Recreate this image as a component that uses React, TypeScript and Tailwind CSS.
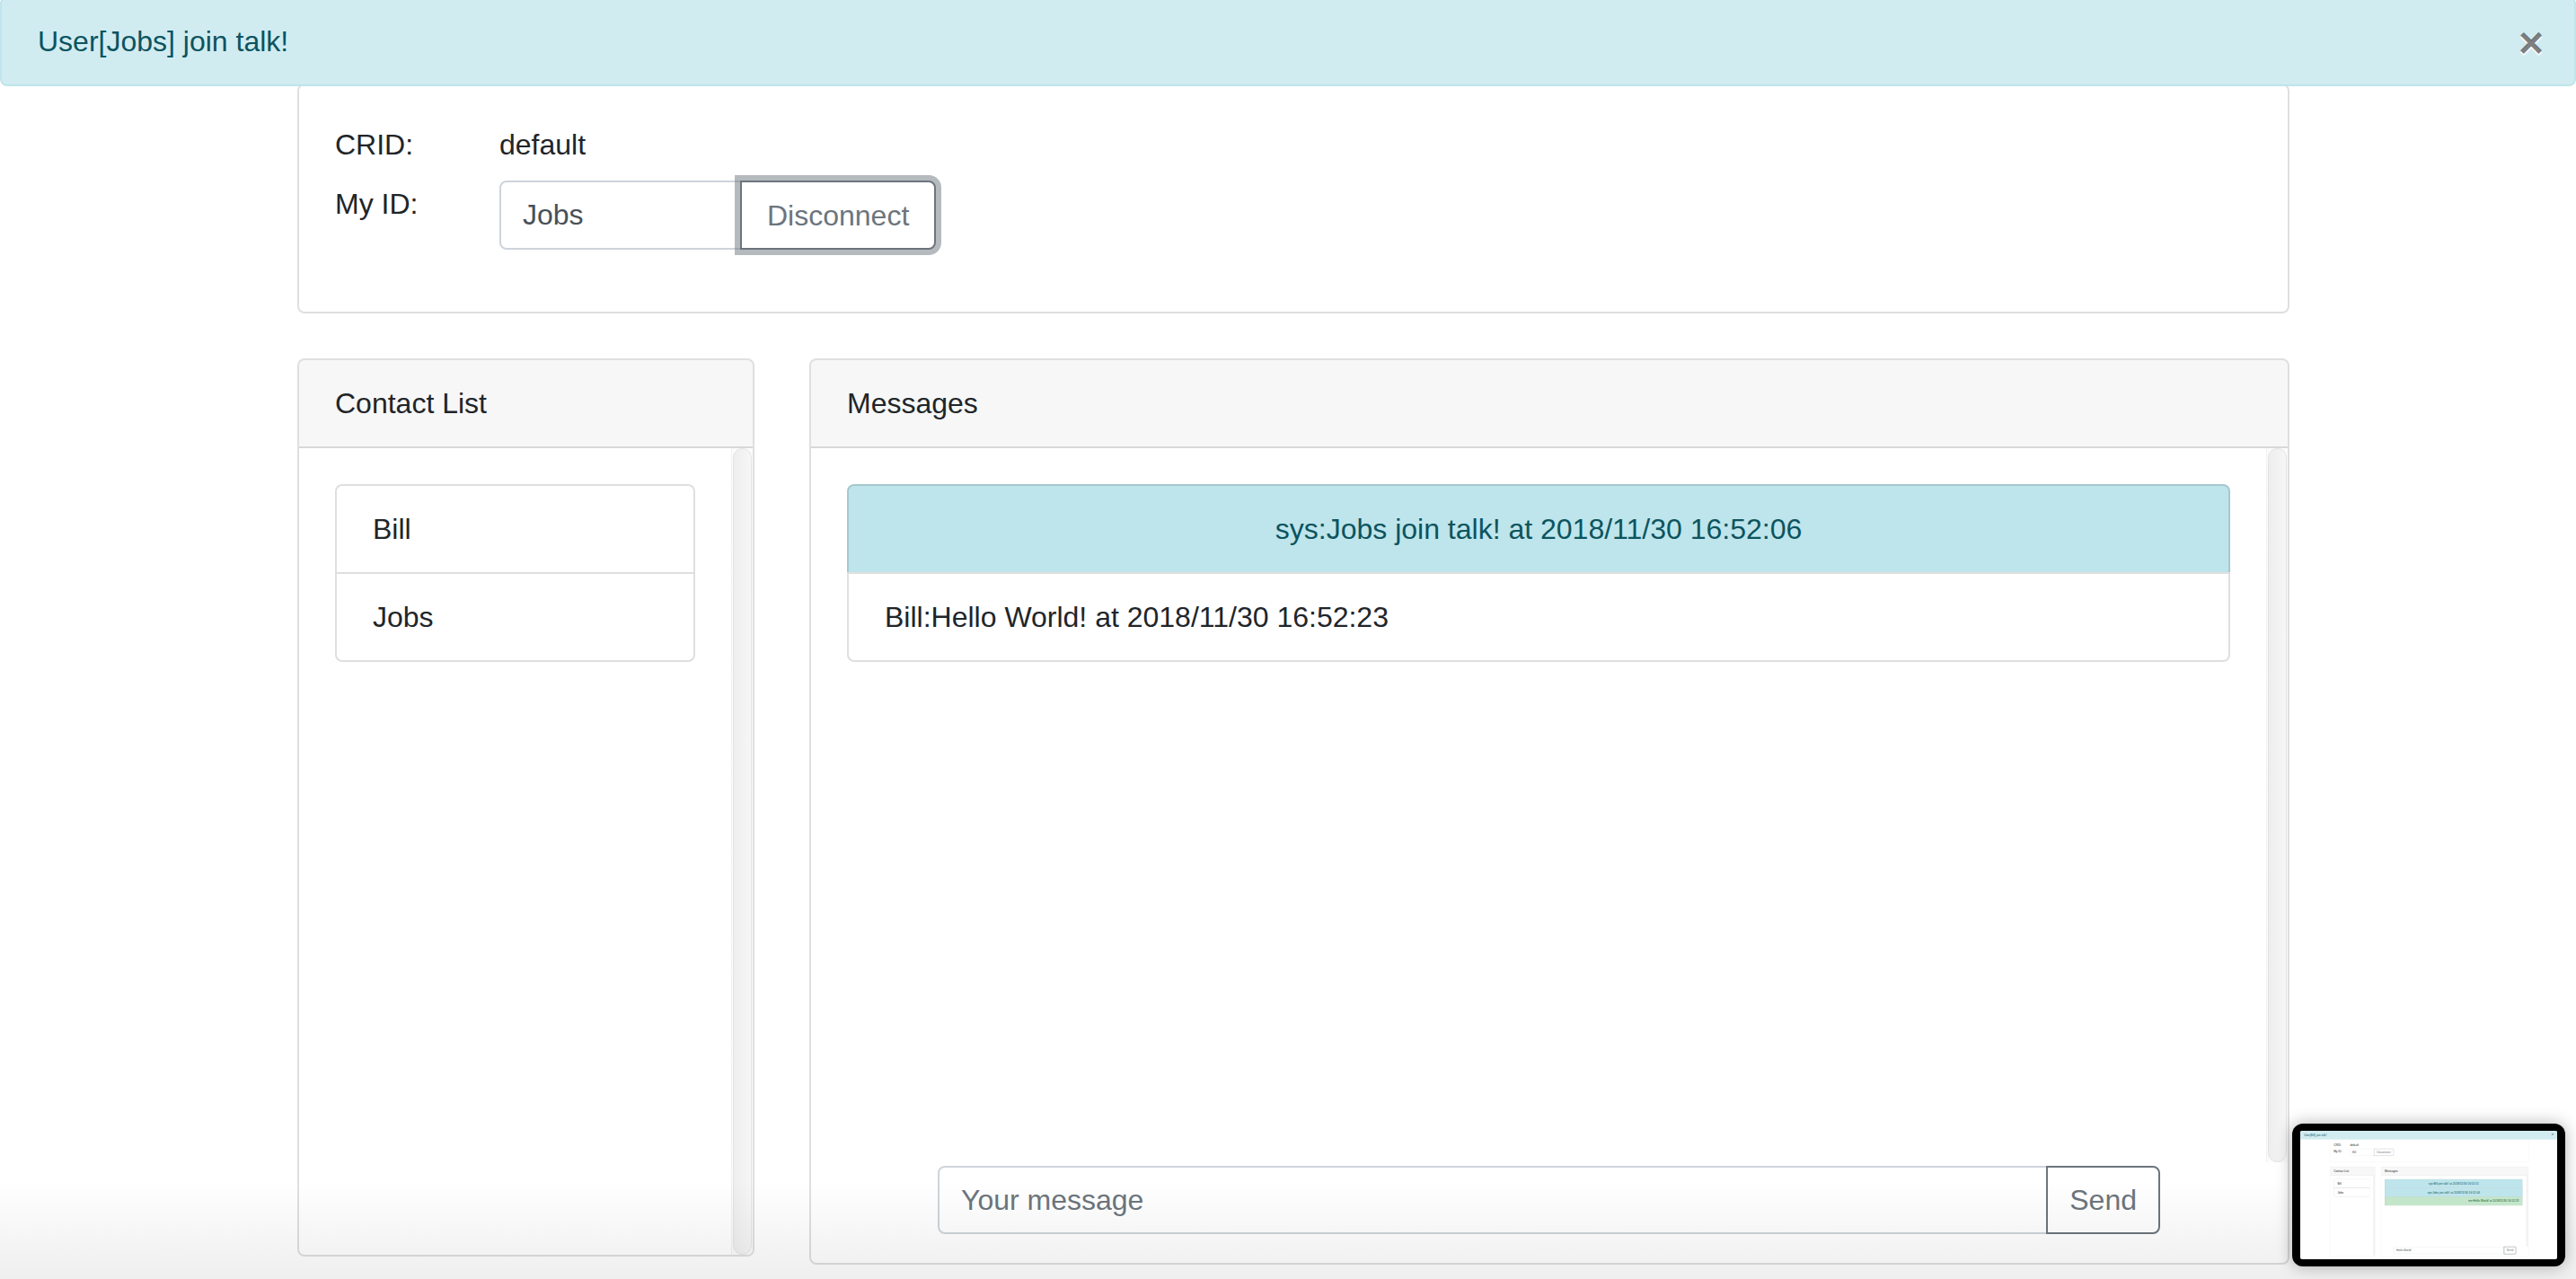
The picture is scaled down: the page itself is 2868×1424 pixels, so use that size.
import React from "react";

type Msg = { text: string; kind: "info" | "plain" | "success" };

type PageProps = {
	alert: string;
	myId: string;
	messages: Msg[];
	draft: string;
	disconnectFocused: boolean;
	sendFocused: boolean;
};

const main: PageProps = {
	alert: "User[Jobs] join talk!",
	myId: "Jobs",
	messages: [
		{ text: "sys:Jobs join talk! at 2018/11/30 16:52:06", kind: "info" },
		{ text: "Bill:Hello World! at 2018/11/30 16:52:23", kind: "plain" },
	],
	draft: "",
	disconnectFocused: true,
	sendFocused: false,
};

// the little screenshot preview in the corner shows Bill's window
const preview: PageProps = {
	alert: "User[Bill] join talk!",
	myId: "Bill",
	messages: [
		{ text: "sys:Bill join talk! at 2018/11/30 16:51:51", kind: "info" },
		{ text: "sys:Jobs join talk! at 2018/11/30 16:52:06", kind: "info" },
		{ text: "me:Hello World! at 2018/11/30 16:52:23", kind: "success" },
	],
	draft: "Hello World!",
	disconnectFocused: false,
	sendFocused: true,
};

const kindClass = {
	info: "bg-[#bee5eb] text-[#0c5460] text-center",
	plain: "bg-white text-[#212529]",
	success: "bg-[#c3e6cb] text-[#155724] text-right",
};

const focusRing = "shadow-[0_0_0_6px_rgba(108,117,125,0.5)]";

function Scrollbar() {
	return (
		<div className="flex w-[24px] shrink-0 justify-center border-l border-[#f1f1f1] bg-[#fbfbfb]">
			<div className="w-[21px] rounded-full border border-[#e3e3e3] bg-linear-to-r from-[#eeeeee] to-[#f6f6f6]" />
		</div>
	);
}

function ListGroup({ items }: { items: Msg[] }) {
	return (
		<div className="flex flex-col">
			{items.map((item, i) => (
				<div
					className={`border-2 border-black/[0.125] px-10 py-6 leading-[48px] ${kindClass[item.kind]} ${
						i === 0 ? "rounded-t-[8px]" : "-mt-[2px]"
					} ${i === items.length - 1 ? "rounded-b-[8px]" : ""}`}
					key={item.text}
				>
					{item.text}
				</div>
			))}
		</div>
	);
}

function CardHeader({ title }: { title: string }) {
	return <div className="border-b-2 border-black/[0.125] bg-black/[0.03] px-10 py-6 leading-[48px]">{title}</div>;
}

function Page(props: PageProps) {
	return (
		<div className="relative h-[1424px] w-[2868px] overflow-hidden bg-white font-['Liberation_Sans',Arial,sans-serif] text-[32px] text-[#212529]">
			<div className="pl-[331px] pt-[93px]">
				<div className="w-[2218px] rounded-[8px] border-2 border-black/[0.125] px-10 pb-10 pt-[42px]">
					<div className="flex leading-[48px]">
						<div className="w-[183px]">CRID:</div>
						<div>default</div>
					</div>
					<div className="mb-[29px] mt-4 flex">
						<div className="w-[183px] pt-[2px] leading-[48px]">My ID:</div>
						<div className="flex">
							<input
								className="h-[77px] w-[270px] rounded-l-[8px] border-2 border-[#ced4da] bg-white px-6 text-[#495057] outline-none"
								readOnly
								value={props.myId}
							/>
							<button
								className={`relative -ml-[2px] h-[77px] rounded-r-[8px] border-2 border-[#6c757d] bg-white px-[28px] text-[#6c757d] ${
									props.disconnectFocused ? focusRing : ""
								}`}
								type="button"
							>
								Disconnect
							</button>
						</div>
					</div>
				</div>

				<div className="mt-[50px] flex items-start gap-[61px]">
					<div className="flex h-[1000px] w-[509px] flex-col overflow-hidden rounded-[8px] border-2 border-black/[0.125]">
						<CardHeader title="Contact List" />
						<div className="flex min-h-0 flex-1">
							<div className="flex-1 p-10">
								<ListGroup
									items={[
										{ text: "Bill", kind: "plain" },
										{ text: "Jobs", kind: "plain" },
									]}
								/>
							</div>
							<Scrollbar />
						</div>
					</div>

					<div className="flex h-[1009px] w-[1648px] flex-col overflow-hidden rounded-[8px] border-2 border-black/[0.125]">
						<CardHeader title="Messages" />
						<div className="flex min-h-0 flex-1">
							<div className="flex-1 p-10">
								<ListGroup items={props.messages} />
							</div>
							<Scrollbar />
						</div>
						<div className="pb-[32px] pl-[141px] pt-[4px]">
							<div className="flex w-[1361px]">
								<input
									className="h-[76px] min-w-0 flex-1 rounded-l-[8px] border-2 border-[#ced4da] bg-white px-6 text-[#495057] outline-none placeholder:text-[#6c757d]"
									placeholder="Your message"
									readOnly
									value={props.draft}
								/>
								<button
									className={`relative -ml-[2px] h-[76px] rounded-r-[8px] border-2 border-[#6c757d] bg-white px-6 text-[#6c757d] ${
										props.sendFocused ? focusRing : ""
									}`}
									type="button"
								>
									Send
								</button>
							</div>
						</div>
					</div>
				</div>
			</div>

			<div className="absolute left-0 right-0 top-[-4px] flex h-[100px] items-center justify-between rounded-[8px] border-2 border-[#bee5eb] bg-[#d1ecf1] pl-[40px] pr-[34px] text-[#0c5460]">
				<span>{props.alert}</span>
				<span className="mt-[4px] text-[48px] font-bold leading-none text-black/50 [text-shadow:0_2px_0_#fff]">×</span>
			</div>
		</div>
	);
}

export default function App() {
	return (
		<div className="relative h-[1424px] w-[2868px] overflow-hidden">
			<Page {...main} />
			<div className="pointer-events-none absolute bottom-0 left-0 right-0 h-[110px] bg-linear-to-b from-black/0 to-black/[0.065]" />
			<div className="absolute bottom-[14px] right-[12px] h-[159px] w-[304px] rounded-[12px] bg-black px-[9px] py-[8px] shadow-[0_0_18px_rgba(0,0,0,0.3)]">
				<div className="h-[143px] w-[286px] overflow-hidden rounded-[2px] bg-white">
					<div className="origin-top-left scale-[0.0997]">
						<Page {...preview} />
					</div>
				</div>
			</div>
		</div>
	);
}
